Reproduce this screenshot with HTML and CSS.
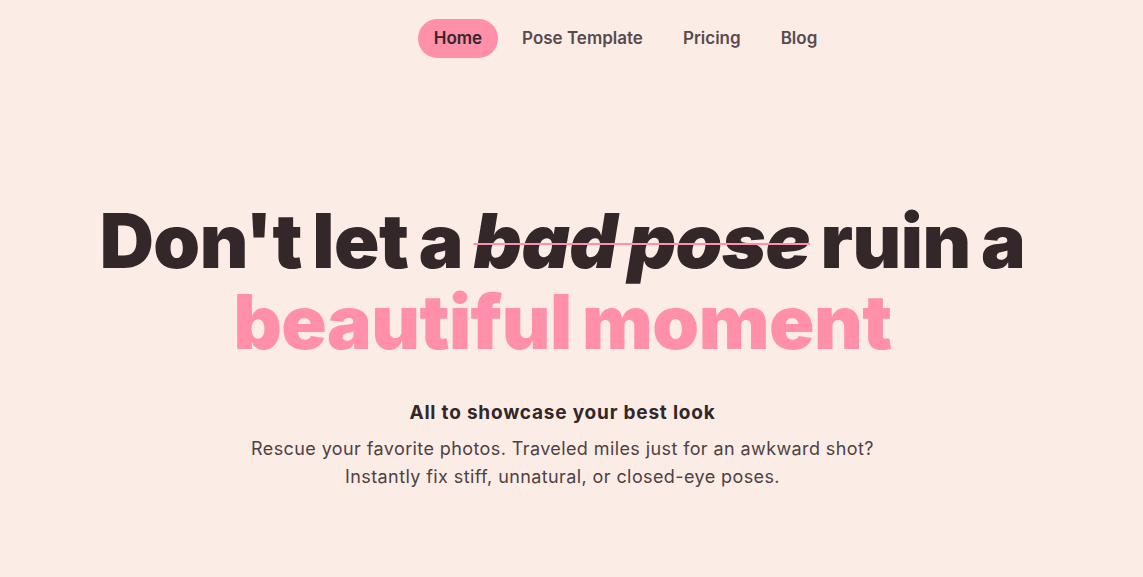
FILE: index.html
```html
<!DOCTYPE html>
<html lang="en">
<head>
<meta charset="utf-8">
<title>Pose</title>
<link rel="stylesheet" href="styles.css">
</head>
<body>
<header class="header">
  <nav class="nav">
    <a class="nav-link active" href="#">Home</a>
    <a class="nav-link" href="#">Pose Template</a>
    <a class="nav-link" href="#">Pricing</a>
    <a class="nav-link" href="#">Blog</a>
  </nav>
</header>
<main class="hero">
  <h1 class="title">
    <span class="line">Don't let a <em class="strike">bad pose</em> ruin a</span>
    <span class="line accent">beautiful moment</span>
  </h1>
  <h2 class="subtitle">All to showcase your best look</h2>
  <p class="desc">Rescue your favorite photos. Traveled miles just for an awkward shot?<br>Instantly fix stiff, unnatural, or closed-eye poses.</p>
</main>
</body>
</html>
```
FILE: styles.css
```css
* { box-sizing: border-box; }
html, body { margin: 0; padding: 0; }
body {
  background: #fbede6;
  font-family: Inter, "Noto Sans", sans-serif;
  color: #33272a;
  min-height: 577px;
}
.header {
  display: flex;
  justify-content: center;
  padding: 19px 0 0 108px;
}
.nav {
  display: flex;
  gap: 8px;
}
.nav-link {
  display: block;
  height: 39px;
  line-height: 39px;
  padding: 0 16px;
  border-radius: 20px;
  font-size: 17px;
  font-weight: 600;
  color: #594a4e;
  text-decoration: none;
}
.nav-link.active {
  background: #ff8fab;
  color: #33272a;
}
.hero {
  display: flex;
  flex-direction: column;
  align-items: center;
  text-align: center;
  padding: 142px 18px 0 0;
}
.title {
  margin: 0;
  font-size: 75px;
  line-height: 81px;
  font-weight: 900;
  letter-spacing: -0.5px;
  word-spacing: -4px;
}
.line { display: block; }
.accent { color: #ff8fab; }
.strike {
  font-style: italic;
  text-decoration: line-through;
  text-decoration-color: #ff8fab;
  text-decoration-thickness: 2px;
}
.subtitle {
  margin: 37px 0 0;
  font-size: 19px;
  line-height: 28px;
  font-weight: 700;
  letter-spacing: 0.8px;
  color: #33272a;
}
.desc {
  margin: 8px 0 0;
  font-size: 18px;
  line-height: 28px;
  font-weight: 400;
  letter-spacing: 0.4px;
  color: #4f4044;
}
```
